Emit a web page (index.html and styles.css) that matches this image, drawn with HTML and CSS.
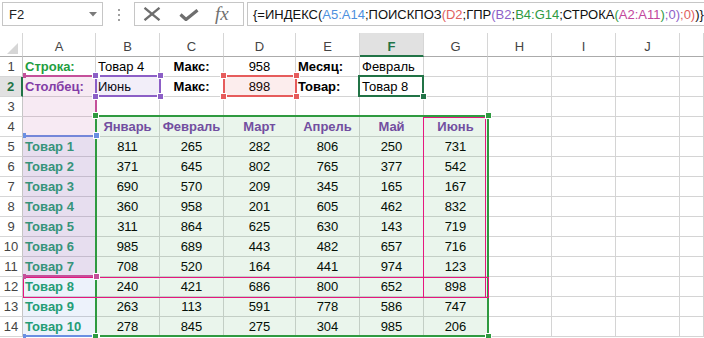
FILE: index.html
```html
<!DOCTYPE html>
<html lang="ru">
<head>
<meta charset="utf-8">
<title>Excel — ИНДЕКС ПОИСКПОЗ</title>
<link rel="stylesheet" href="styles.css">
</head>
<body>
<div class="app">
  <div class="fbar">
    <div class="namebox"><span>F2</span><svg class="nb-arrow" width="8" height="5" viewBox="0 0 8 5"><path d="M0 0H8L4 4.5Z" fill="#7a7a7a"/></svg></div>
    <div class="grip"><i></i><i></i><i></i></div>
    <div class="fbtns">
      <svg class="ico-x" width="18" height="14" viewBox="0 0 18 14"><path d="M1.5 0.8L16.5 13.2M16.5 0.8L1.5 13.2" stroke="#6e6e6e" stroke-width="2.3" fill="none"/></svg>
      <svg class="ico-ok" width="20" height="12" viewBox="0 0 20 12"><path d="M1.5 5.5L7 10.5L18.5 1.2" stroke="#6e6e6e" stroke-width="3.2" fill="none" stroke-linejoin="round"/></svg>
      <span class="fx">fx</span>
    </div>
    <div class="formula">{=ИНДЕКС(<span class="rb">A5:A14</span>;ПОИСКПОЗ<span class="rr">(D2</span>;ГПР<span class="rp">(B2</span>;<span class="rg">B4:G14</span>;СТРОКА<span class="rg">(</span><span class="rm">A2:A11</span><span class="rg">)</span><span class="rp">;0)</span><span class="rr">;0)</span>)}</div>
  </div>

  <div class="sheet">
    <div class="corner"><svg width="22" height="22" viewBox="0 0 22 22"><path d="M18 9V20H7Z" fill="#d6d6d6"/></svg></div>
    <div class="ch">A</div><div class="ch">B</div><div class="ch">C</div><div class="ch">D</div><div class="ch">E</div><div class="ch sel">F</div><div class="ch">G</div><div class="ch">H</div><div class="ch">I</div><div class="ch">J</div><div class="ch"></div>

    <div class="rh">1</div><div class="c b tg">Строка:</div><div class="c">Товар 4</div><div class="c n b">Макс:</div><div class="c n">958</div><div class="c b">Месяц:</div><div class="c">Февраль</div><div class="c"></div><div class="c"></div><div class="c"></div><div class="c"></div><div class="c"></div>

    <div class="rh sel">2</div><div class="c b tp">Столбец:</div><div class="c">Июнь</div><div class="c n b">Макс:</div><div class="c n">898</div><div class="c b">Товар:</div><div class="c">Товар 8</div><div class="c"></div><div class="c"></div><div class="c"></div><div class="c"></div><div class="c"></div>

    <div class="rh">3</div><div class="c"></div><div class="c"></div><div class="c"></div><div class="c"></div><div class="c"></div><div class="c"></div><div class="c"></div><div class="c"></div><div class="c"></div><div class="c"></div><div class="c"></div>

    <div class="rh">4</div><div class="c"></div><div class="c n b tm">Январь</div><div class="c n b tm">Февраль</div><div class="c n b tm">Март</div><div class="c n b tm">Апрель</div><div class="c n b tm">Май</div><div class="c n b tm">Июнь</div><div class="c"></div><div class="c"></div><div class="c"></div><div class="c"></div>

    <div class="rh">5</div><div class="c b tt">Товар 1</div><div class="c n">811</div><div class="c n">265</div><div class="c n">282</div><div class="c n">806</div><div class="c n">250</div><div class="c n">731</div><div class="c"></div><div class="c"></div><div class="c"></div><div class="c"></div>

    <div class="rh">6</div><div class="c b tt">Товар 2</div><div class="c n">371</div><div class="c n">645</div><div class="c n">802</div><div class="c n">765</div><div class="c n">377</div><div class="c n">542</div><div class="c"></div><div class="c"></div><div class="c"></div><div class="c"></div>

    <div class="rh">7</div><div class="c b tt">Товар 3</div><div class="c n">690</div><div class="c n">570</div><div class="c n">209</div><div class="c n">345</div><div class="c n">165</div><div class="c n">167</div><div class="c"></div><div class="c"></div><div class="c"></div><div class="c"></div>

    <div class="rh">8</div><div class="c b tt">Товар 4</div><div class="c n">360</div><div class="c n">958</div><div class="c n">201</div><div class="c n">605</div><div class="c n">462</div><div class="c n">832</div><div class="c"></div><div class="c"></div><div class="c"></div><div class="c"></div>

    <div class="rh">9</div><div class="c b tt">Товар 5</div><div class="c n">311</div><div class="c n">864</div><div class="c n">625</div><div class="c n">630</div><div class="c n">143</div><div class="c n">719</div><div class="c"></div><div class="c"></div><div class="c"></div><div class="c"></div>

    <div class="rh">10</div><div class="c b tt">Товар 6</div><div class="c n">985</div><div class="c n">689</div><div class="c n">443</div><div class="c n">482</div><div class="c n">657</div><div class="c n">716</div><div class="c"></div><div class="c"></div><div class="c"></div><div class="c"></div>

    <div class="rh">11</div><div class="c b tt">Товар 7</div><div class="c n">708</div><div class="c n">520</div><div class="c n">164</div><div class="c n">441</div><div class="c n">974</div><div class="c n">123</div><div class="c"></div><div class="c"></div><div class="c"></div><div class="c"></div>

    <div class="rh">12</div><div class="c b tt">Товар 8</div><div class="c n">240</div><div class="c n">421</div><div class="c n">686</div><div class="c n">800</div><div class="c n">652</div><div class="c n">898</div><div class="c"></div><div class="c"></div><div class="c"></div><div class="c"></div>

    <div class="rh">13</div><div class="c b tt">Товар 9</div><div class="c n">263</div><div class="c n">113</div><div class="c n">591</div><div class="c n">778</div><div class="c n">586</div><div class="c n">747</div><div class="c"></div><div class="c"></div><div class="c"></div><div class="c"></div>

    <div class="rh">14</div><div class="c b tt">Товар 10</div><div class="c n">278</div><div class="c n">845</div><div class="c n">275</div><div class="c n">304</div><div class="c n">985</div><div class="c n">206</div><div class="c"></div><div class="c"></div><div class="c"></div><div class="c"></div>

    <!-- reference highlight overlays -->
    <div class="rng r-blue"><i class="h tl"></i><i class="h tr"></i><i class="h bl"></i><i class="h br"></i></div>
    <div class="rng r-mag"><i class="h tl"></i><i class="h tr"></i><i class="h bl"></i><i class="h br"></i></div>
    <div class="rng r-pur"><i class="h tl"></i><i class="h tr"></i><i class="h bl"></i><i class="h br"></i></div>
    <div class="rng r-red"><i class="h tl"></i><i class="h tr"></i><i class="h bl"></i><i class="h br"></i></div>
    <div class="rng r-grn"><i class="h tl"></i><i class="h tr"></i><i class="h bl"></i><i class="h br"></i></div>
    <div class="cf cf-col"></div>
    <div class="cf cf-row"></div>
    <div class="selbox"><i class="fill"></i></div>
  </div>
</div>
</body>
</html>
```
FILE: styles.css
```css
* { box-sizing: border-box; }
html, body { margin: 0; padding: 0; background: #fff; }
body {
  font-family: "Liberation Sans", Arial, sans-serif;
  font-size: 13px;
  color: #000;
}
.app { width: 704px; height: 338px; overflow: hidden; }

/* formula bar */
.fbar { display: flex; height: 33px; padding-top: 2px; }
.namebox {
  margin-left: 2px; width: 101px; height: 24px;
  border: 1px solid #c6c6c6;
  display: flex; align-items: center; justify-content: space-between;
  padding: 0 5px 0 6px; color: #222;
}
.grip {
  width: 31px; display: flex; flex-direction: column; align-items: center;
  gap: 3px; padding-top: 7px;
}
.grip i { display: block; width: 2px; height: 2px; background: #a0a0a0; }
.fbtns {
  width: 110px; height: 24px; border: 1px solid #c6c6c6;
  display: flex; align-items: center; padding-left: 8px;
}
.ico-ok { margin-left: 18px; margin-top: 2px; }
.fx {
  margin-left: 16px; font-family: "Liberation Serif", "DejaVu Serif", serif;
  font-style: italic; font-size: 19px; color: #707070; line-height: 1;
  margin-top: -2px;
}
.formula {
  margin-left: 3px; flex: 1; height: 24px;
  border: 1px solid #c6c6c6; border-right: none;
  padding-left: 5px; display: flex; align-items: center; white-space: nowrap;
  color: #111;
}
.rb { color: #4d90de; }
.rr { color: #e0605e; }
.rp { color: #8d5fc8; }
.rg { color: #2f9a43; }
.rm { color: #c2469c; }

/* sheet */
.sheet {
  position: relative;
  display: grid;
  grid-template-columns: 23px 73px 64px 64px 72px repeat(6, 64px) 1fr;
  grid-template-rows: 24px repeat(14, 20px);
}
.corner { border-right: 1px solid #d6d6d6; border-bottom: 1px solid #ababab; }
.corner svg { display: block; margin-top: 1px; }
.ch {
  border-right: 1px solid #d6d6d6; border-bottom: 1px solid #ababab;
  color: #444; display: flex; align-items: center; justify-content: center;
  padding-top: 4px;
}
.ch.sel { background: #e1e1e1; color: #217346; font-weight: bold; border-bottom: 2px solid #217346; padding-top: 5px; }
.rh {
  border-right: 1px solid #c6c6c6; border-bottom: 1px solid #d6d6d6;
  color: #444; display: flex; align-items: center; justify-content: center;
}
.rh.sel { background: #e1e1e1; color: #217346; font-weight: bold; border-right: 2px solid #217346; }
.c {
  border-right: 1px solid #d4d4d4; border-bottom: 1px solid #d4d4d4;
  display: flex; align-items: center; padding: 0 2px; white-space: nowrap;
}
.n { justify-content: center; }
.b { font-weight: bold; }
.tg { color: #1f9e41; }
.tp { color: #7b3aa8; }
.tm { color: #7a46ab; }
.tt { color: #20a16b; }

/* range highlight overlays */
.rng { position: absolute; border: 2px solid; }
.r-blue { left: 23px; top: 102px; width: 74px; height: 202px; border-color: #6a8fe2; border-left: 0; background: rgba(74, 127, 216, 0.1); }
.r-mag  { left: 23px; top: 42px;  width: 74px; height: 202px; border-color: #c4509a; border-left: 0; background: rgba(192, 80, 154, 0.12); }
.r-pur  { left: 95px; top: 42px;  width: 66px; height: 22px;  border-color: #8c5fc6; background: rgba(128, 90, 200, 0.1); }
.r-red  { left: 223px; top: 42px; width: 74px; height: 22px;  border-color: #e65c5c; background: rgba(230, 80, 80, 0.1); }
.r-grn  { left: 95px; top: 82px;  width: 394px; height: 222px; border-color: #2f9a40; background: rgba(46, 153, 64, 0.1); }
.h {
  position: absolute; width: 5px; height: 5px; z-index: 1;
  background: currentColor; box-shadow: 0 0 0 1px #fff;
}
.r-blue .h { color: #6a8fe2; }
.r-mag .h { color: #c4509a; }
.r-pur .h { color: #8c5fc6; }
.r-red .h { color: #e65c5c; }
.r-grn .h { color: #2f9a40; z-index: 2; }
.h.tl { left: -4px; top: -4px; }
.h.tr { right: -4px; top: -4px; }
.h.bl { left: -4px; bottom: -4px; }
.h.br { right: -4px; bottom: -4px; }
.r-blue .h.tl, .r-blue .h.bl, .r-mag .h.tl, .r-mag .h.bl { left: 0; width: 3px; box-shadow: none; }

/* conditional borders */
.cf { position: absolute; border: 1px solid #e5177f; }
.cf-col { left: 423px; top: 84px; width: 63px; height: 181px; }
.cf-row { left: 23px; top: 244px; width: 466px; height: 21px; }

/* active cell */
.selbox { position: absolute; left: 358px; top: 42px; width: 66px; height: 22px; border: 2px solid #217346; }
.selbox .fill {
  position: absolute; right: -4px; bottom: -4px; width: 5px; height: 5px;
  background: #217346; box-shadow: 0 0 0 1px #fff; z-index: 3;
}
```
